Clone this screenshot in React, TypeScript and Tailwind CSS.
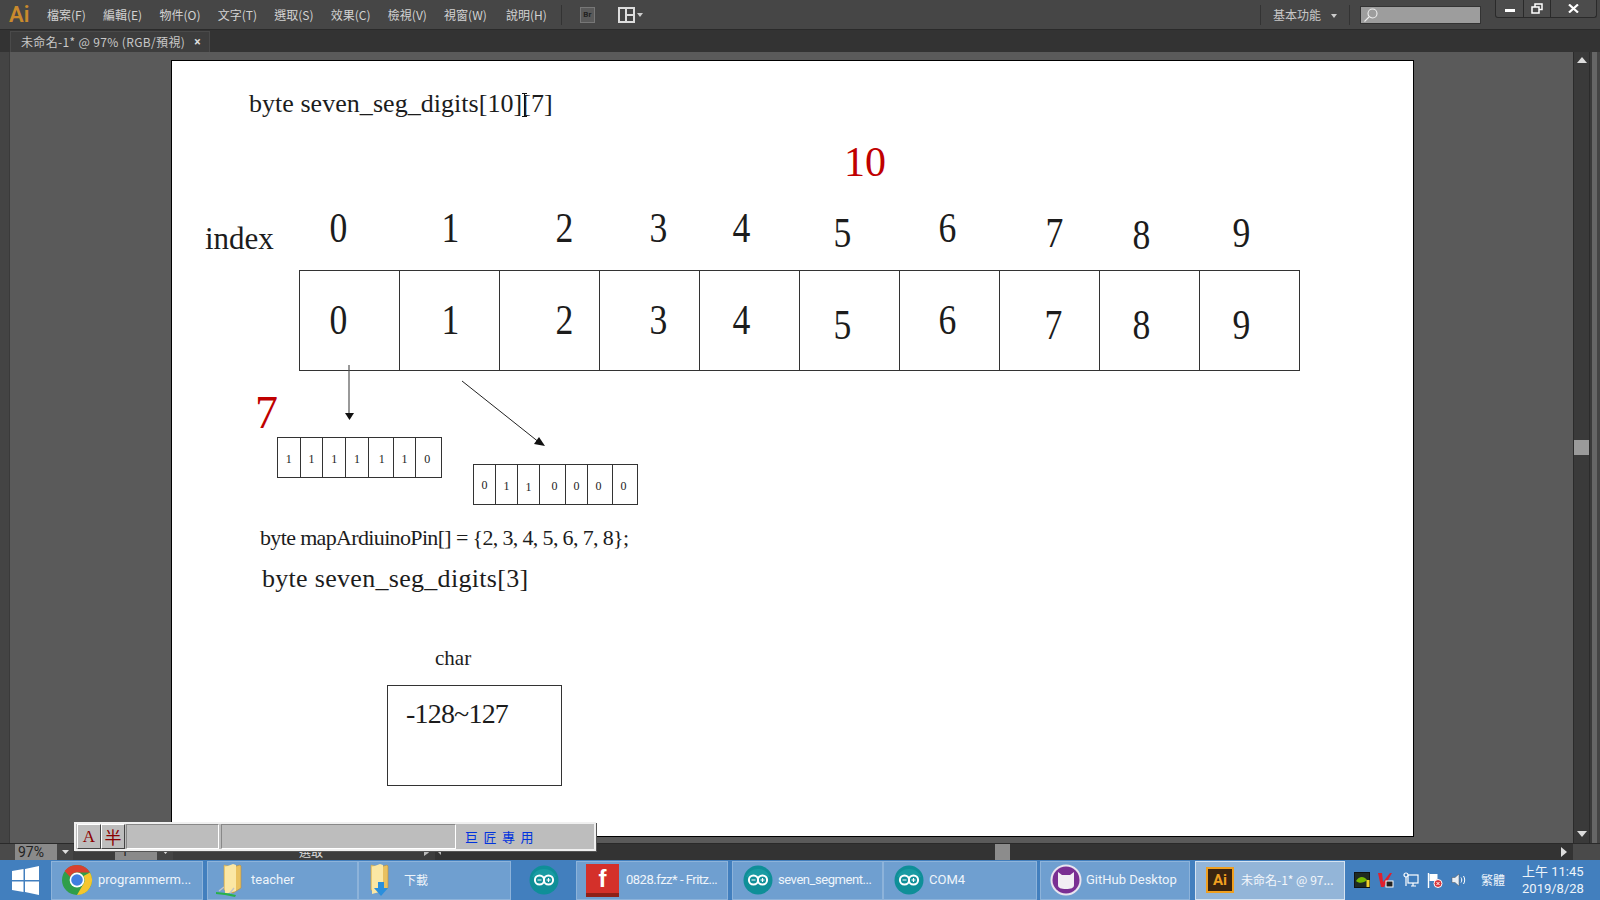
import type { ReactNode } from 'react';

const cjk = "font-['Noto_Sans_CJK_TC','Noto_Sans',sans-serif]";
const ui = "font-['Roboto','Noto_Sans_CJK_TC',sans-serif]";
const serif = "font-['Liberation_Serif',serif]";

const menus = ['檔案(F)', '編輯(E)', '物件(O)', '文字(T)', '選取(S)', '效果(C)', '檢視(V)', '視窗(W)', '說明(H)'];

const bigCells = [
  { n: 0, box: 'w-[100px]', cls: 'ml-[28px]', top: '' },
  { n: 1, box: 'w-[100px]', cls: 'ml-[40px]', top: '' },
  { n: 2, box: 'w-[100px]', cls: 'ml-[54px]', top: '' },
  { n: 3, box: 'w-[100px]', cls: 'ml-[48px]', top: '' },
  { n: 4, box: 'w-[100px]', cls: 'ml-[31px]', top: '' },
  { n: 5, box: 'w-[100px]', cls: 'ml-[32px]', top: 'mt-[10px]' },
  { n: 6, box: 'w-[100px]', cls: 'ml-[37px]', top: '' },
  { n: 7, box: 'w-[100px]', cls: 'ml-[43px]', top: 'mt-[10px]' },
  { n: 8, box: 'w-[100px]', cls: 'ml-[31px]', top: 'mt-[10px]' },
  { n: 9, box: 'w-[99px]', cls: 'ml-[31px]', top: 'mt-[10px]' },
];

const indexLabels = [
  { n: 0, cls: 'left-[156px] top-[146px]' },
  { n: 1, cls: 'left-[268px] top-[146px]' },
  { n: 2, cls: 'left-[382px] top-[146px]' },
  { n: 3, cls: 'left-[476px] top-[146px]' },
  { n: 4, cls: 'left-[559px] top-[146px]' },
  { n: 5, cls: 'left-[660px] top-[151px]' },
  { n: 6, cls: 'left-[765px] top-[146px]' },
  { n: 7, cls: 'left-[872px] top-[151px]' },
  { n: 8, cls: 'left-[959px] top-[153px]' },
  { n: 9, cls: 'left-[1059px] top-[151px]' },
];

function Label({ className, children }: { className: string; children: ReactNode }) {
  return <div className={`absolute whitespace-nowrap leading-none text-[#1c1c1c] ${serif} ${className}`}>{children}</div>;
}

function SmallArray({ bits, className }: { bits: { v: number; cls: string }[]; className: string }) {
  return (
    <div className={`absolute flex h-[41px] w-[165px] border border-[#333] bg-white ${className}`}>
      {bits.map((b, i) => (
        <div key={i} className={`flex flex-1 items-center justify-center border-r border-[#333] text-[12px] text-[#222] last:border-r-0 ${serif} ${b.cls}`}>
          {b.v}
        </div>
      ))}
    </div>
  );
}

function ArduinoIcon() {
  return (
    <svg width="30" height="30" viewBox="0 0 30 30">
      <circle cx="15" cy="15" r="14.5" fill="#0f8f98" />
      <path d="M3 12a13 13 0 0 1 24 0z" fill="#1fa4aa" opacity="0.6" />
      <circle cx="10.5" cy="15" r="4.6" fill="none" stroke="#fff" strokeWidth="2" />
      <circle cx="19.5" cy="15" r="4.6" fill="none" stroke="#fff" strokeWidth="2" />
      <path d="M8.5 15h4M17.5 15h4M19.5 13v4" stroke="#fff" strokeWidth="1.2" />
    </svg>
  );
}

function FolderIcon({ badge }: { badge?: 'link' | 'down' }) {
  return (
    <svg width="30" height="36" viewBox="0 0 30 36">
      <path d="M8 3l9 2v26l-9-3z" fill="#f4d67e" stroke="#c9a24a" strokeWidth="0.6" />
      <path d="M17 5l7-2 1 1v22l-8 5z" fill="#e9c160" stroke="#b98f3c" strokeWidth="0.6" />
      <path d="M9 5l8-3 3 1v26l-11 3z" fill="#fbe7a4" />
      {badge === 'down' && <path d="M15 20h6v6h4l-7 8-7-8h4z" fill="#2a8fdc" />}
      {badge === 'link' && (
        <>
          <path d="M0 30l10 1 10 2-1 2-10-2-9-1z" fill="#27b14a" />
          <path d="M3 29l5-4M14 31l4-5" stroke="#c4c4c4" strokeWidth="1.4" />
        </>
      )}
    </svg>
  );
}

function ChromeIcon() {
  return (
    <svg width="32" height="32" viewBox="0 0 32 32">
      <circle cx="16" cy="16" r="15" fill="#2f9e4a" />
      <path d="M16 1a15 15 0 0 1 13 7.5H16a7.5 7.5 0 0 0-6.8 4.4L3.6 7A15 15 0 0 1 16 1z" fill="#d9402f" />
      <path d="M29 8.5A15 15 0 0 1 16 31l6.5-11.2A7.5 7.5 0 0 0 22.5 12z" fill="#f6c62d" />
      <circle cx="16" cy="16" r="7.4" fill="#fff" />
      <circle cx="16" cy="16" r="5.8" fill="#3f7fe0" />
    </svg>
  );
}

function TaskButton({ className, icon, label, labelClass }: { className: string; icon: ReactNode; label: string; labelClass?: string }) {
  return (
    <div className={`flex h-[39px] shrink-0 items-center border border-[#8db3da] bg-[#6f9fd0] ${className}`}>
      {icon}
      <span className={`whitespace-nowrap text-[13px] text-[#eef4fa] ${labelClass ?? ''}`}>{label}</span>
    </div>
  );
}

function Tray() {
  return (
    <div className="ml-[9px] flex items-center">
      <svg className="mr-[8px]" width="16" height="16" viewBox="0 0 16 16">
        <rect x="0.5" y="0.5" width="15" height="15" fill="#1f2a22" stroke="#111" />
        <path d="M2 9c3-5 8-5 11-1-3 3-8 4-11 1z" fill="#76b900" />
        <rect x="12.5" y="8" width="3" height="7" fill="#f3d12b" />
      </svg>
      <svg className="mr-[9px]" width="16" height="16" viewBox="0 0 16 16">
        <path d="M0 1h4l1 9 7-9h2L6 15H3z" fill="#e0202e" />
        <rect x="8" y="9" width="7" height="6" fill="#222" stroke="#fff" />
      </svg>
      <svg className="mr-[8px]" width="16" height="16" viewBox="0 0 16 16" fill="none" stroke="#fff" strokeWidth="1.2">
        <rect x="5" y="3" width="10" height="8" fill="#3f7dbd" />
        <circle cx="3" cy="3" r="2" fill="#3f7dbd" />
        <path d="M3 5v9M8 14h5M10 11v3" />
      </svg>
      <svg className="mr-[8px]" width="16" height="16" viewBox="0 0 16 16">
        <path d="M1.5 1v15" stroke="#fff" strokeWidth="1.4" />
        <path d="M2.5 2h8v7h-8z" fill="#fff" />
        <circle cx="11" cy="11.5" r="4" fill="#d8343a" stroke="#fff" />
        <path d="M9.5 10l3 3M12.5 10l-3 3" stroke="#fff" strokeWidth="1" />
      </svg>
      <svg width="16" height="16" viewBox="0 0 16 16" fill="none">
        <path d="M1 5.500h3l4-3.500v12l-4-3.500H1z" fill="#e8eef5" stroke="#555" strokeWidth="0.5" />
        <path d="M10 5.500c1 1.500 1 3.500 0 5M12.500 4c1.600 2.500 1.600 5.500 0 8" stroke="#fff" strokeWidth="1" />
      </svg>
      <span className={`ml-[14px] text-[12px] text-[#eef4fa] ${cjk}`}>繁體</span>
      <div className={`ml-[17px] flex flex-col items-start text-[13px] leading-[17px] text-[#eef4fa] ${ui}`}>
        <span>上午 11:45</span>
        <span>2019/8/28</span>
      </div>
    </div>
  );
}

export default function App() {
  return (
    <div className={`relative flex h-[900px] w-[1600px] flex-col overflow-hidden bg-[#5a5a5a] ${cjk}`}>
      {/* menu bar */}
      <div className="flex h-[30px] shrink-0 items-center border-b border-[#2a2a2a] bg-[#464646] text-[12px] text-[#d2d2d2]">
        <span className={`ml-[9px] w-[38px] text-[22px] leading-none font-semibold text-[#c98a2d] ${ui}`}>Ai</span>
        <div className="flex gap-[17.25px]">
          {menus.map((m) => (
            <span key={m} className="whitespace-nowrap last:ml-[2px]">{m}</span>
          ))}
        </div>
        <div className="ml-[14px] h-[20px] w-px bg-[#333]" />
        <div className={`ml-[18px] flex h-[16px] w-[15px] items-center justify-center border border-[#777] bg-[#5a5a5a] text-[8px] font-bold text-[#222] ${ui}`}>Br</div>
        <svg className="ml-[23px]" width="27" height="16" viewBox="0 0 27 16">
          <rect x="0.5" y="0.5" width="16" height="15" fill="#ddd" stroke="#ddd" />
          <path d="M2 2h5v12H2zM9 2h6v5H9zM9 9h6v5H9z" fill="#444" />
          <path d="M19 6h6l-3 4z" fill="#ccc" />
        </svg>
        <div className="ml-auto flex h-full items-start">
          <div className="mt-[5px] h-[20px] w-px bg-[#333]" />
          <span className="mt-[6px] ml-[12px] text-[#c8c8c8]">基本功能</span>
          <svg className="mt-[14px] ml-[10px]" width="6" height="4" viewBox="0 0 6 4"><path d="M0 0h6l-3 4z" fill="#ccc" /></svg>
          <div className="mt-[5px] ml-[12px] h-[20px] w-px bg-[#333]" />
          <div className="mt-[6px] ml-[10px] flex h-[18px] w-[121px] items-center border border-[#333] bg-[#9d9d9d] pl-[3px]">
            <svg width="14" height="14" viewBox="0 0 14 14" fill="none" stroke="#eee" strokeWidth="1.1">
              <circle cx="8.500" cy="5.500" r="4.500" />
              <path d="M5 9l-4.500 4.500" />
            </svg>
          </div>
          <div className="ml-[14px] flex h-[18px] w-[102px] items-center rounded-b-[3px] border border-t-0 border-[#2a2a2a] bg-[#4c4c4c]">
            <div className="flex h-full w-[28px] items-center justify-center border-r border-[#2a2a2a]">
              <div className="mt-[3px] h-[3px] w-[10px] bg-white" />
            </div>
            <div className="flex h-full w-[27px] items-center justify-center border-r border-[#2a2a2a]">
              <svg width="12" height="11" viewBox="0 0 12 11" fill="none" stroke="#fff" strokeWidth="1.500">
                <rect x="4" y="1" width="7" height="5.500" />
                <rect x="1" y="4" width="7" height="6" fill="#4c4c4c" />
              </svg>
            </div>
            <div className="flex h-full flex-1 items-center justify-center">
              <svg width="11" height="9" viewBox="0 0 11 9" stroke="#fff" strokeWidth="2.200"><path d="M1 0.500l9 8M10 0.500l-9 8" /></svg>
            </div>
          </div>
          <div className="w-[3px]" />
        </div>
      </div>

      {/* document tab */}
      <div className="flex h-[22px] shrink-0 items-end bg-[#333]">
        <div className="ml-[10px] flex h-[21px] w-[200px] items-center border-t border-r border-l border-[#4a4a4a] bg-[#3d3d3d] pl-[10px] text-[12px] text-[#c8c8c8]">
          <span className="whitespace-nowrap tracking-[0.35px]">未命名-1* @ 97% (RGB/預視)</span>
          <span className={`ml-[9px] text-[12px] font-bold text-[#ddd] ${ui}`}>×</span>
        </div>
      </div>

      {/* workspace */}
      <div className="flex min-h-0 flex-1">
        <div className="w-[10px] shrink-0 border-r border-[#3a3a3a] bg-[#444]" />
        <div className="min-w-0 flex-1 pt-[8px] pl-[161px]">
          <div className="relative h-[777px] w-[1243px] border border-black bg-white">
            <Label className="left-[77px] top-[30px] text-[26px] tracking-[0.04px]">byte seven_seg_digits[10][7]</Label>
            <div className="absolute top-[32px] left-[350px] h-[24px] w-[5px] border-y border-[#111] after:absolute after:top-0 after:left-[2px] after:h-full after:w-px after:bg-[#111]" />
            <Label className="left-[672px] top-[80px] text-[42px] !text-[#c00000]">10</Label>
            <Label className="left-[33px] top-[162px] text-[31px]">index</Label>
            {indexLabels.map((l) => (
              <Label key={l.n} className={`text-[42px] scale-x-[0.85] ${l.cls}`}>{l.n}</Label>
            ))}
            {/* main array */}
            <div className="absolute top-[209px] left-[127px] flex h-[101px] border border-[#333]">
              {bigCells.map((c) => (
                <div key={c.n} className={`flex h-full items-center border-r border-[#333] last:border-r-0 ${c.box}`}>
                  <span className={`-translate-y-px scale-x-[0.85] text-[42px] leading-none text-[#1c1c1c] ${serif} ${c.cls} ${c.top}`}>{c.n}</span>
                </div>
              ))}
            </div>
            {/* arrows */}
            <svg className="absolute top-[300px] left-[170px]" width="400" height="90" viewBox="0 0 400 90">
              <path d="M7 4v50" stroke="#555" strokeWidth="1.200" />
              <path d="M3 52h9l-4.500 7z" fill="#111" />
              <path d="M120 20l78 62" stroke="#222" strokeWidth="1" />
              <path d="M203 85l-11-2 5-7z" fill="#111" />
            </svg>
            <Label className="left-[83px] top-[329px] text-[46px] !text-[#c00000]">7</Label>
            <SmallArray
              className="top-[376px] left-[105px]"
              bits={[
                { v: 1, cls: 'pt-[2px]' },
                { v: 1, cls: 'pt-[2px]' },
                { v: 1, cls: 'pt-[3px]' },
                { v: 1, cls: 'pt-[3px]' },
                { v: 1, cls: 'pt-[2px] pl-[2px]' },
                { v: 1, cls: 'pt-[2px]' },
                { v: 0, cls: 'pt-[2px] pr-[3px]' },
              ]}
            />
            <SmallArray
              className="top-[403px] left-[301px]"
              bits={[
                { v: 0, cls: '' },
                { v: 1, cls: 'pt-[3px]' },
                { v: 1, cls: 'pt-[5px]' },
                { v: 0, cls: 'pl-[4px] pt-[3px]' },
                { v: 0, cls: 'pt-[3px]' },
                { v: 0, cls: 'pt-[3px] pr-[3px]' },
                { v: 0, cls: 'pt-[3px] pr-[3px]' },
              ]}
            />
            <Label className="left-[88px] top-[466px] text-[22px] tracking-[-0.65px]">byte mapArdiuinoPin[] = {'{'}2, 3, 4, 5, 6, 7, 8{'}'};</Label>
            <Label className="left-[90px] top-[505px] text-[26px] tracking-[0.3px]">byte seven_seg_digits[3]</Label>
            <Label className="left-[263px] top-[587px] text-[21px]">char</Label>
            <div className="absolute top-[624px] left-[215px] h-[101px] w-[175px] border border-[#333] pt-[14px] pl-[18px]">
              <span className={`whitespace-nowrap text-[28px] leading-none tracking-[-0.8px] text-[#1c1c1c] ${serif}`}>-128~127</span>
            </div>
          </div>
        </div>
        <div className="flex w-[27px] shrink-0">
          <div className="relative flex w-[17px] flex-col items-center border-x border-[#2b2b2b] bg-[#3a3a3a]">
            <svg className="mt-[5px]" width="10" height="6" viewBox="0 0 10 6"><path d="M5 0l5 6H0z" fill="#ddd" /></svg>
            <div className="mt-[377px] h-[15px] w-full bg-[#9a9a9a]" />
            <svg className="mt-auto mb-[6px]" width="10" height="6" viewBox="0 0 10 6"><path d="M0 0h10L5 6z" fill="#ddd" /></svg>
          </div>
          <div className="w-[2px] bg-[#3a3a3a]" />
          <div className="w-[5px] bg-[#666]" />
          <div className="w-[3px] bg-[#444]" />
        </div>
      </div>

      {/* status + horizontal scroll */}
      <div className="flex h-[17px] shrink-0 items-stretch border-t border-[#2a2a2a] bg-[#333]">
        <div className="w-[15px] bg-[#4a4a4a]" />
        <div className={`flex w-[42px] items-center bg-[#8a8a8a] pl-[3px] text-[14px] text-[#222] ${ui}`}>97%</div>
        <div className="flex w-[16px] items-center justify-center bg-[#454545]">
          <svg width="7" height="4" viewBox="0 0 7 4"><path d="M0 0h7L3.500 4z" fill="#ddd" /></svg>
        </div>
        <div className="w-[42px] bg-[#3d3d3d]" />
        <div className={`flex w-[42px] items-center bg-[#8a8a8a] pl-[6px] text-[13px] text-[#222] ${ui}`}>1</div>
        <div className="flex w-[16px] items-center justify-center bg-[#454545]">
          <svg width="7" height="4" viewBox="0 0 7 4"><path d="M0 0h7L3.500 4z" fill="#ddd" /></svg>
        </div>
        <div className="w-[42px] bg-[#3d3d3d]" />
        <div className="flex w-[202px] items-center justify-center bg-[#3d3d3d] pr-[10px] text-[12px] text-[#ddd]">選取</div>
        <div className="flex w-[18px] items-center justify-center bg-[#3d3d3d]">
          <svg width="5" height="7" viewBox="0 0 5 7"><path d="M0 0l5 3.500L0 7z" fill="#bbb" /></svg>
        </div>
        <div className="flex w-[6px] items-center justify-center">
          <svg width="6" height="6" viewBox="0 0 6 6"><path d="M0 0h6v6z" fill="#bbb" /></svg>
        </div>
        <div className="flex-1" />
        <div className="mr-[551px] w-[15px] bg-[#8c8c8c]" />
        <div className="flex w-[12px] items-center">
          <svg width="6" height="10" viewBox="0 0 6 10"><path d="M0 0l6 5-6 5z" fill="#ddd" /></svg>
        </div>
        <div className="w-[27px] bg-[#4a4a4a]" />
      </div>

      {/* windows taskbar */}
      <div className={`flex h-[40px] shrink-0 items-center bg-[#427fbe] ${ui}`}>
        <div className="flex w-[51px] shrink-0 items-center justify-center">
          <svg width="27" height="29" viewBox="0 0 27 29"><path d="M0 5l11.500-2v11H0zM13 3l14-3v14H13zM0 15.500h11.500V26L0 24zM13 15.500h14V29l-14-3z" fill="#fff" /></svg>
        </div>
        <TaskButton className="w-[152px] pl-[9px]" icon={<ChromeIcon />} label="programmerm..." labelClass="ml-[5px]" />
        <TaskButton className="ml-[4px] w-[151px] pl-[8px]" icon={<FolderIcon badge="link" />} label="teacher" labelClass="ml-[5px]" />
        <TaskButton className="w-[153px] pl-[4px]" icon={<FolderIcon badge="down" />} label="下載" labelClass={`ml-[11px] ${cjk} !text-[12px]`} />
        <div className="flex w-[65px] shrink-0 justify-center"><ArduinoIcon /></div>
        <TaskButton
          className="w-[152px] pl-[9px]"
          icon={
            <div className="relative flex h-[33px] w-[33px] items-center justify-center overflow-hidden bg-[#d4302a] pb-[3px] font-['Liberation_Sans',sans-serif] text-[24px] leading-none font-bold text-white">
              f
              <div className="absolute inset-x-0 bottom-0 h-[4px] bg-[#8e2018]" />
            </div>
          }
          label="0828.fzz* - Fritz..."
          labelClass="ml-[7px] tracking-[-0.5px]"
        />
        <TaskButton className="ml-[4px] w-[151px] pl-[10px]" icon={<ArduinoIcon />} label="seven_segment..." labelClass="ml-[5px] tracking-[-0.45px]" />
        <TaskButton className="w-[154px] pl-[10px]" icon={<ArduinoIcon />} label="COM4" labelClass="ml-[5px]" />
        <TaskButton
          className="ml-[3px] w-[150px] pl-[9px]"
          icon={
            <svg width="32" height="32" viewBox="0 0 32 32">
              <circle cx="16" cy="16" r="15.500" fill="#e9e4ef" />
              <circle cx="16" cy="16" r="13.500" fill="#7a2f93" />
              <path d="M8 8l4 3h8l4-3v13c0 3-3 4-8 4s-8-1-8-4z" fill="#f2eef4" />
            </svg>
          }
          label="GitHub Desktop"
          labelClass="ml-[4px]"
        />
        <div className="ml-[5px] flex h-[39px] w-[150px] shrink-0 items-center border border-[#d5e3f1] bg-[#93b5d8] pl-[10px]">
          <div className={`flex h-[26px] w-[28px] items-center justify-center border-2 border-[#f0a020] bg-[#3a2410] text-[15px] font-bold text-[#f0a020] ${ui}`}>Ai</div>
          <span className={`ml-[7px] text-[12px] whitespace-nowrap text-[#f3f7fb] ${cjk}`}>未命名-1* @ 97...</span>
        </div>
        <Tray />
      </div>

      {/* IME bar over the status row */}
      <div className="absolute top-[822px] left-[74px] flex h-[29px] w-[522px] items-center border-2 border-[#f0f0f0] bg-[#bdbdbd] px-[1px] shadow-[1px_1px_0_#555]">
        <div className={`flex h-[25px] w-[24px] items-center justify-center border border-t-white border-r-[#444] border-b-[#444] border-l-white text-[17px] leading-none text-[#8b0000] ${serif}`}>A</div>
        <div className={`flex h-[25px] w-[24px] items-center justify-center border border-t-white border-r-[#444] border-b-[#444] border-l-white text-[17px] leading-none text-[#8b0000] ${cjk}`}>半</div>
        <div className="ml-[1px] h-[25px] w-[93px] border border-t-[#888] border-r-white border-b-white border-l-[#888]" />
        <div className="ml-[2px] h-[25px] w-[235px] border border-t-[#888] border-r-white border-b-white border-l-[#888]" />
        <span className={`ml-[9px] text-[13px] tracking-[5.5px] whitespace-nowrap text-[#0033dd] ${cjk}`}>巨匠專用</span>
      </div>
    </div>
  );
}
